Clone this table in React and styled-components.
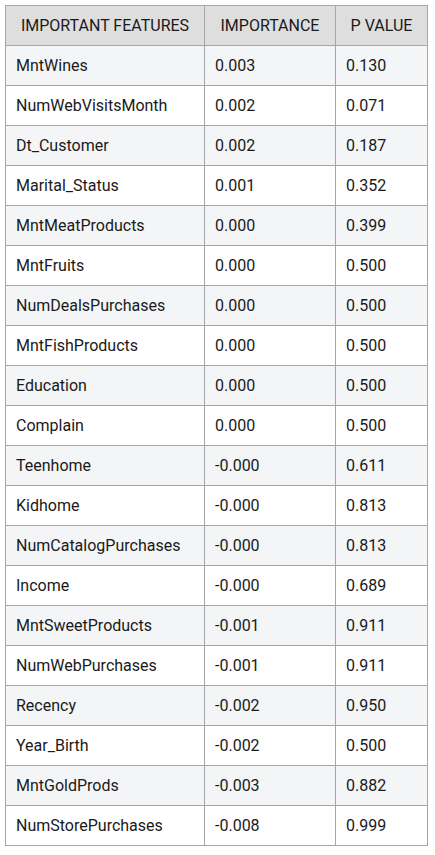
import React from "react";
import styled, { createGlobalStyle } from "styled-components";

const rows = [
	["MntWines", "0.003", "0.130"],
	["NumWebVisitsMonth", "0.002", "0.071"],
	["Dt_Customer", "0.002", "0.187"],
	["Marital_Status", "0.001", "0.352"],
	["MntMeatProducts", "0.000", "0.399"],
	["MntFruits", "0.000", "0.500"],
	["NumDealsPurchases", "0.000", "0.500"],
	["MntFishProducts", "0.000", "0.500"],
	["Education", "0.000", "0.500"],
	["Complain", "0.000", "0.500"],
	["Teenhome", "-0.000", "0.611"],
	["Kidhome", "-0.000", "0.813"],
	["NumCatalogPurchases", "-0.000", "0.813"],
	["Income", "-0.000", "0.689"],
	["MntSweetProducts", "-0.001", "0.911"],
	["NumWebPurchases", "-0.001", "0.911"],
	["Recency", "-0.002", "0.950"],
	["Year_Birth", "-0.002", "0.500"],
	["MntGoldProds", "-0.003", "0.882"],
	["NumStorePurchases", "-0.008", "0.999"],
];

const Global = createGlobalStyle`
	body {
		margin: 0;
		padding: 5px 5px;
		background: #fff;
		font-family: Roboto, "Liberation Sans", sans-serif;
	}
`

const App = () => {
	return (
		<>
			<Global />
			<Table>
				<colgroup>
					<col style={{ width: "199px" }} />
					<col style={{ width: "131px" }} />
					<col style={{ width: "92px" }} />
				</colgroup>
				<thead>
					<tr>
						<Th>IMPORTANT FEATURES</Th>
						<Th>IMPORTANCE</Th>
						<Th>P VALUE</Th>
					</tr>
				</thead>
				<tbody>
					{rows.map((r, i) => (
						<Row key={r[0]} $shaded={i % 2 === 0}>
							<Td>{r[0]}</Td>
							<Td>{r[1]}</Td>
							<Td>{r[2]}</Td>
						</Row>
					))}
				</tbody>
			</Table>
		</>
	)
}

const Table = styled.table`
	width: 423px;
	border-collapse: collapse;
	table-layout: fixed;
	border: 1px solid #999;
	color: #1a1a1a;
	font-size: 16px;
`

const Th = styled.th`
	height: 39px;
	padding: 0;
	background: #dedede;
	border: 1px solid #a6a6a6;
	font-weight: 400;
	text-align: center;
`

const Row = styled.tr`
	background: ${(p) => (p.$shaded ? "#f3f5f7" : "#fff")};
`

const Td = styled.td`
	height: 39px;
	padding: 0 0 0 10px;
	border: 1px solid #a6a6a6;
	text-align: left;
`

export default App
